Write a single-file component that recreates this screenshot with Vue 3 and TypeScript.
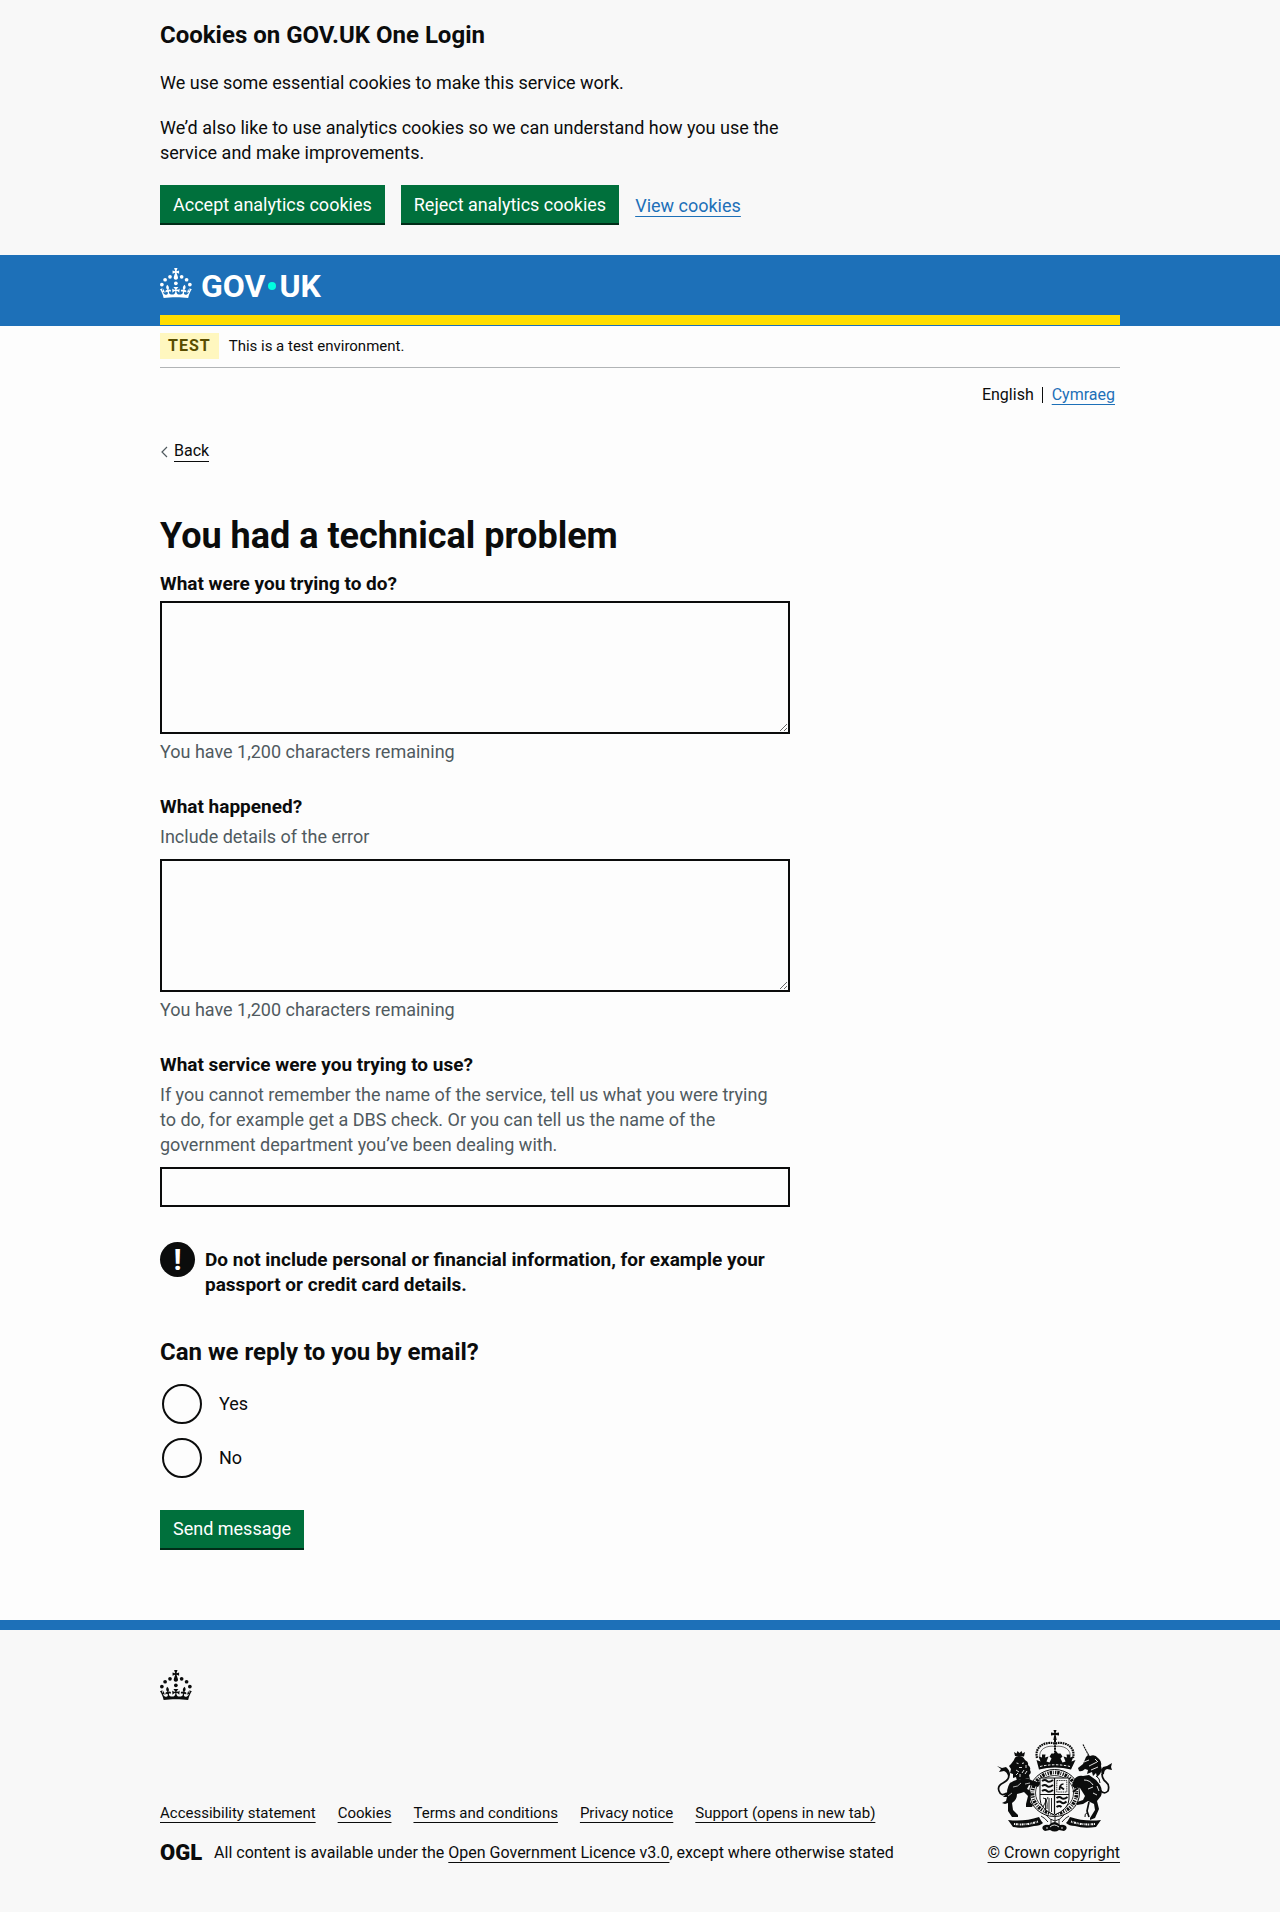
<script setup lang="ts">
import { ref } from 'vue'

const limit = 1200
const doing = ref('')
const happened = ref('')
const service = ref('')
const reply = ref('')

const remaining = (text: string) =>
  `You have ${(limit - text.length).toLocaleString('en-GB')} characters remaining`

const footerLinks = [
  'Accessibility statement',
  'Cookies',
  'Terms and conditions',
  'Privacy notice',
  'Support (opens in new tab)',
]

const crown =
  'M33.1,9.8c.2-.1.3-.3.5-.5l4.6,2.4v-6.8l-4.6,1.5c-.1-.2-.3-.3-.5-.5l1.9-5.9h-6.7l1.9,5.9c-.2.1-.3.3-.5.5l-4.6-1.5v6.8l4.6-2.4c.1.2.3.3.5.5l-2.6,8c-.9,2.8,1.2,5.7,4.1,5.7h0c3,0,5.1-2.9,4.1-5.7l-2.6-8ZM37,37.9s-3.4,3.8-4.1,6.1c2.2,0,4.2-.5,6.4-2.8l-.7,8.5c-2-2.8-4.4-4.1-5.7-3.8.1,3.1.5,6.7,5.8,7.2,3.7.3,6.7-1.5,7-3.8.4-2.6-2-4.3-3.7-1.6-1.4-4.5,2.4-6.1,4.9-3.2-1.9-4.5-1.8-7.7,2.4-10.9,3,4,2.6,7.3-1.2,11.1,2.4-1.3,6.2,0,4,4.6-1.2-2.8-3.7-2.2-4.2.2-.3,1.7.7,3.7,3,4.2,1.9.3,4.7-.9,7-5.9-1.3,0-2.4.7-3.9,1.7l2.4-8c.6,2.3,1.4,3.7,2.2,4.5.6-1.6.5-2.8,0-5.3l5,1.8c-2.6,3.6-5.2,8.7-7.3,17.5-7.4-1.1-15.7-1.7-24.5-1.7h0c-8.8,0-17.1.6-24.5,1.7-2.1-8.9-4.7-13.9-7.3-17.5l5-1.8c-.5,2.5-.6,3.7,0,5.3.8-.8,1.6-2.3,2.2-4.5l2.4,8c-1.5-1-2.6-1.7-3.9-1.7,2.3,5,5.2,6.2,7,5.9,2.3-.4,3.3-2.4,3-4.2-.5-2.4-3-3.1-4.2-.2-2.2-4.6,1.6-6,4-4.6-3.7-3.7-4.2-7.1-1.2-11.1,4.2,3.2,4.3,6.4,2.4,10.9,2.5-2.8,6.3-1.3,4.9,3.2-1.8-2.7-4.1-1-3.7,1.6.3,2.3,3.3,4.1,7,3.8,5.4-.5,5.7-4.2,5.8-7.2-1.3-.2-3.7,1-5.7,3.8l-.7-8.5c2.2,2.3,4.2,2.7,6.4,2.8-.7-2.3-4.1-6.1-4.1-6.1h10.6,0Z'
const crownDots = [
  [20, 17.6], [10.2, 23.5], [3.7, 33.2], [31.7, 30.6], [43.3, 17.6], [53.2, 23.5], [59.7, 33.2],
]
</script>

<template>
  <div class="page">
    <section class="cookies" aria-label="Cookies on GOV.UK One Login">
      <div class="container">
        <div class="column">
          <h2>Cookies on GOV.UK One Login</h2>
          <p>We use some essential cookies to make this service work.</p>
          <p>We’d also like to use analytics cookies so we can understand how you use the service and make improvements.</p>
        </div>
        <div class="button-group">
          <button type="button" class="button">Accept analytics cookies</button>
          <button type="button" class="button">Reject analytics cookies</button>
          <a href="#" class="link">View cookies</a>
        </div>
      </div>
    </section>

    <header class="header">
      <div class="container header-bar">
        <a href="#" class="logo" aria-label="GOV.UK">
          <svg class="crown" viewBox="0 0 64 60" fill="currentColor" aria-hidden="true">
            <circle v-for="([x, y], i) in crownDots" :key="i" :cx="x" :cy="y" r="3.7" />
            <path :d="crown" />
          </svg>
          <span class="wordmark"><span>GOV</span><i class="dot"></i><span>UK</span></span>
        </a>
      </div>
    </header>

    <div class="container">
      <div class="phase">
        <strong class="tag">TEST</strong>
        <span>This is a test environment.</span>
      </div>
      <nav class="languages" aria-label="Choose a language">
        <span>English</span>
        <a href="#" class="link">Cymraeg</a>
      </nav>
      <a href="#" class="back">
        <svg viewBox="0 0 8 12" aria-hidden="true"><path d="M7 1 2 6l5 5" fill="none" stroke="#505a5f" stroke-width="1.2" /></svg>
        <span>Back</span>
      </a>

      <main class="column">
        <h1>You had a technical problem</h1>
        <form @submit.prevent>
          <div class="field">
            <label for="doing">What were you trying to do?</label>
            <textarea id="doing" v-model="doing" aria-describedby="doing-count"></textarea>
            <p id="doing-count" class="hint">{{ remaining(doing) }}</p>
          </div>
          <div class="field">
            <label for="happened">What happened?</label>
            <p id="happened-hint" class="hint above">Include details of the error</p>
            <textarea id="happened" v-model="happened" aria-describedby="happened-hint happened-count"></textarea>
            <p id="happened-count" class="hint">{{ remaining(happened) }}</p>
          </div>
          <div class="field">
            <label for="service">What service were you trying to use?</label>
            <p id="service-hint" class="hint above">If you cannot remember the name of the service, tell us what you were trying to do, for example get a DBS check. Or you can tell us the name of the government department you’ve been dealing with.</p>
            <input id="service" v-model="service" type="text" aria-describedby="service-hint" />
          </div>

          <div class="warning">
            <span class="warning-icon" aria-hidden="true">!</span>
            <strong>Do not include personal or financial information, for example your passport or credit card details.</strong>
          </div>

          <fieldset>
            <legend>Can we reply to you by email?</legend>
            <div class="radio">
              <input id="reply-yes" v-model="reply" type="radio" name="reply" value="yes" />
              <label for="reply-yes">Yes</label>
            </div>
            <div class="radio">
              <input id="reply-no" v-model="reply" type="radio" name="reply" value="no" />
              <label for="reply-no">No</label>
            </div>
          </fieldset>

          <button type="submit" class="button">Send message</button>
        </form>
      </main>
    </div>

    <footer class="footer">
      <div class="container">
        <svg class="crown" viewBox="0 0 64 60" fill="currentColor" aria-hidden="true">
          <circle v-for="([x, y], i) in crownDots" :key="i" :cx="x" :cy="y" r="3.7" />
          <path :d="crown" />
        </svg>
        <div class="footer-meta">
          <div class="footer-main">
            <ul>
              <li v-for="label in footerLinks" :key="label"><a href="#">{{ label }}</a></li>
            </ul>
            <p class="licence">
              <span class="ogl" aria-hidden="true">OGL</span>
              <span>All content is available under the <a href="#">Open Government Licence v3.0</a>, except where otherwise stated</span>
            </p>
          </div>
          <a href="#" class="copyright">
            <svg class="arms" viewBox="0 0 120 104" fill="none" stroke="currentColor" aria-hidden="true">
              <!-- crown -->
              <g fill="currentColor" stroke="none">
                <path d="M59.500 1h3l-.8 3 3.300-.6v3.200l-3.300-.6 1 5h-3.400l1-5-3.300.6V3.400l3.300.6z" />
                <path d="M45 40.500 42.500 31l4 1.500-2-5 3.500 1 0-3 3.500 0-.5 3 3.500-1-2 5 3 1 2-4-2-2 2-3 2.500 0 2-2.500 2 2.500 2.500 0 2 3-2 2 2 4 3-1-2-5 3.500 1-.5-3 3.500 0 0 3 3.500-1-2 5 4-1.500L77 40.500q-16-4-32 0z" />
              </g>
              <path d="M46 37.500q15-3.500 30 0" stroke="#f8f8f8" stroke-width="1" stroke-dasharray="2.500 1.500" />
              <path d="M43 29C40 17 52 12 61 14.500C70 12 82 17 79 29" stroke-width="2.200" stroke-dasharray="1.700 .7" />
              <path d="M46 29C44 20 53 16 61 17.500C69 16 78 20 76 29" stroke-width=".6" />
              <path d="M61 11v15" stroke-width="2" stroke-dasharray="2 .6" />
              <!-- garter and quartered shield -->
              <ellipse cx="60.500" cy="64" rx="25" ry="23.500" stroke-width="1" />
              <ellipse cx="60.500" cy="64" rx="22" ry="20.500" stroke-width="3.600" stroke-dasharray="1.300 .9 2.400 .9 .8 1.400" />
              <ellipse cx="60.500" cy="64" rx="19" ry="17.500" stroke-width=".8" />
              <path d="M46 49h29v21q0 10-14.500 16Q46 80 46 70z" fill="#f8f8f8" stroke-width="1" />
              <path d="M60.500 49v36M46 65.500h29" stroke-width="1.200" />
              <path d="M48 52q3-2 5 0t6-1M48 57q3-2 5 0t6-1M48 62q3-2 5 0t6-1M62.500 69q3-2 5 0t6-1M62.500 73.500q3-2 5 0t5-1M62.500 78q3-2 5 0" stroke-width="2" />
              <path d="M62.800 51.500h10v11.500h-10z" stroke-width=".8" stroke-dasharray="1.500 .7" />
              <path d="M65.500 61q0-6 4-6M66 57.500l4 3" stroke-width="1.700" />
              <path d="M49 69q5 0 4 11M49 78l5-10M51.500 69v12M55 69v14M57.500 69v14" stroke-width=".9" />
              <!-- lion -->
              <g fill="currentColor" stroke="none">
                <path d="M21 27l-1-4 2.500 1.500 1-2.500 2 2 2-2 1 2.500L31 23l-1 4.500z" />
                <path d="M20 31q1-4 5-4t6 4q4 2 3 5 3 2 2 5 2 3-1 5l1 4-4-1-2 4-4-3-3 2-1-4-3 1 0-4-3-1 1-4-2-3 2-2z" />
                <path d="M16 54q6-4 12-4 6-2 9 1l5 2q4-1 4 2l-2 3-4-1-5-1-2 4q4 1 4 5l-1 8 3 3-1 2-6 0 0-3 2-8-4-4-3 1-4 1q0 6-5 9l1 7 5 5 0 2-6 0-4-6 0-8-3 1-3-1 4-2 1-4-4 0 4-4q0-7 5-13z" />
                <path d="M3 37l5 2 4-1q4 3 4 8l-2 1q-1-4-4-5l-5 1 2-3z" />
              </g>
              <path d="M15 46q0 5-6 8T5 62q2 6 8 2" stroke-width="1.700" />
              <path d="M22.500 34l2 .6M28 34.500l2-.6M25 38.500h3M22 41l3 2M30 41l-2 3M22 46l2-2M31 45l2-3M26 45v3M32 36v3" stroke="#f8f8f8" stroke-width=".9" />
              <path d="M19 58q5 0 8-4M31 55l5-1M14 67l4-3" stroke="#f8f8f8" stroke-width=".7" />
              <!-- unicorn -->
              <path d="M89 15.500 95 27" stroke-width="1.100" stroke-dasharray="2 .5" />
              <g fill="currentColor" stroke="none">
                <path d="M92 28l2-2 2 1q5-2 8 2 4 3 3 8l1 4-2 4-3 3-1-4-3 3-1-4-5 2 1-4-3-1q-3 3-6 2l-1-3 5-4z" />
                <path d="M80 51q3-5 9-4l6-1 7 5 4 5q3 5 1 11l-4 5 2 8-4 9-5 2 0-2 5-8-1-6-6-3-5 3-6 1 0-3 6-2 2-4-5-8-4-1q-4 1-4-2z" />
                <path d="M109 38l4-1 5-3-1 4 1 3-5-1q-3 1-3 5l-2 1q-2-5 1-8z" />
              </g>
              <path d="M95 73l-2 9 2 6M84 59l-5 4M108 45q0 5 4 8t2 9q-4 4-8-1" stroke-width="1.700" />
              <path d="M90 33l5-2M95 37l8-4M97 41l7-3M101 30l3 3M90 51q6 0 9 5M94 60l5-2M99 64l4 2M103 57l2 5" stroke="#f8f8f8" stroke-width=".9" />
              <path d="M102 47q4 2 4 7M94 83q-4 2-3 5" stroke-width="1" />
              <!-- compartment and motto ribbon -->
              <path d="M47 87q4 2 7 6M75 87q-4 2-7 6M52 86q4 5 9 6 5-1 9-6M57 90v6M65 90v6M61 86v9" stroke-width=".9" />
              <g fill="currentColor" stroke="none">
                <path d="M14 91q16 2 31-3 2 4 4 6-3 3-9 3-9 3-21 1z" />
                <path d="M107 91q-16 2-31-3-2 4-4 6 3 3 9 3 9 3 21 1z" />
                <path d="M49 97q3-2 6-1 3-3 5.500-3t5.500 3q3-1 6 1 2 3-2 5l-5-1q-4 3-9 0l-5 1q-4-2-2-5z" />
              </g>
              <path d="M20 95q13 1.500 24-2.500M101 95q-13 1.500-24-2.500" stroke="#f8f8f8" stroke-width="2" stroke-dasharray="1 .7 2 .8 .6 .7" />
              <path d="M56 98q4-4 9 0M52 99h2M67 99h2" stroke="#f8f8f8" stroke-width=".9" />
            </svg>
            <span>© Crown copyright</span>
          </a>
        </div>
      </div>
    </footer>
  </div>
</template>

<style>
body {
  background: #fdfdfd;
}
</style>

<style scoped>
.page {
  color: #0b0c0c;
  font-family: Roboto, "Liberation Sans", Arial, sans-serif;
  font-size: 18px;
  line-height: 25px;
}
.page *,
.page *::before {
  box-sizing: border-box;
}
.container {
  max-width: 960px;
  margin: 0 auto;
}
@media (max-width: 1020px) {
  .container {
    margin: 0 30px;
  }
}
.column {
  max-width: 630px;
}
h1,
h2,
p,
ul,
fieldset {
  margin: 0;
  padding: 0;
}
h2,
legend {
  font-size: 24px;
  font-weight: 700;
  line-height: 30px;
}
a {
  color: inherit;
  text-decoration-thickness: 1px;
  text-underline-offset: 4px;
}
a.link {
  color: #1d70b8;
}
.button {
  height: 40px;
  padding: 0 13px 2px;
  border: 0;
  background: #00703c;
  box-shadow: inset 0 -2px 0 #002d18;
  color: #fff;
  font: inherit;
  cursor: pointer;
}

/* Cookie banner */
.cookies {
  padding: 20px 0 30px;
  background: #f8f8f8;
}
.cookies h2,
.cookies p {
  margin-bottom: 20px;
}
.button-group {
  display: flex;
  flex-wrap: wrap;
  align-items: center;
  gap: 16px;
}

/* Header */
.header {
  background: #1d70b8;
}
.header-bar {
  display: flex;
  padding-top: 13px;
  height: 70px;
  border-bottom: 10px solid #ffdd00;
}
.header {
  padding-bottom: 1px;
}
.logo {
  display: flex;
  gap: 9px;
  height: 30px;
  color: #fff;
  text-decoration: none;
}
.crown {
  display: block;
  width: 32px;
  height: 30px;
}
.wordmark {
  display: flex;
  align-items: center;
  gap: 3px;
  padding-top: 6px;
  font-size: 32px;
  font-weight: 700;
  line-height: 30px;
}
.dot {
  width: 8px;
  height: 8px;
  border-radius: 50%;
  background: #00ffe0;
}

/* Page top */
.phase {
  display: flex;
  align-items: center;
  gap: 10px;
  padding: 7px 0 8px;
  border-bottom: 1px solid #b1b4b6;
  font-size: 15px;
}
.tag {
  padding: 0 8px;
  background: #fff7bf;
  color: #594d00;
  font-size: 16px;
  line-height: 26px;
  letter-spacing: 1px;
}
.languages {
  display: flex;
  justify-content: flex-end;
  padding: 17px 5px 0 0;
  font-size: 16px;
  line-height: 20px;
}
.languages span {
  padding-right: 8px;
}
.languages a {
  position: relative;
  padding-left: 10px;
}
.languages a::before {
  content: "";
  position: absolute;
  left: 0;
  top: 2px;
  height: 16px;
  border-left: 1px solid #0b0c0c;
}
.back {
  display: inline-flex;
  align-items: center;
  gap: 6px;
  margin-top: 36px;
  font-size: 16px;
  line-height: 20px;
  text-decoration: none;
}
.back svg {
  width: 8px;
  height: 12px;
}
.back span {
  border-bottom: 1px solid;
}

/* Form */
main {
  padding: 52px 0 70px;
}
h1 {
  margin-bottom: 15px;
  font-size: 36px;
  font-weight: 700;
  line-height: 40px;
}
.field {
  margin-bottom: 30px;
}
.field label {
  display: block;
  margin-bottom: 5px;
  font-size: 19px;
  font-weight: 700;
}
.hint {
  max-width: 620px;
  color: #505a5f;
}
.hint.above {
  margin-bottom: 10px;
}
textarea,
input[type="text"] {
  display: block;
  width: 100%;
  padding: 5px;
  border: 2px solid #0b0c0c;
  border-radius: 0;
  background: transparent;
  color: inherit;
  font: inherit;
}
textarea {
  height: 133px;
  margin-bottom: 5px;
  resize: vertical;
}
input[type="text"] {
  height: 40px;
}
.warning {
  display: flex;
  gap: 10px;
  margin: 35px 0 40px;
  font-size: 19px;
}
.warning strong {
  padding-top: 5px;
}
.warning-icon {
  flex: none;
  width: 35px;
  height: 35px;
  border-radius: 50%;
  background: #0b0c0c;
  color: #fff;
  font-size: 30px;
  font-weight: 700;
  line-height: 35px;
  text-align: center;
}
fieldset {
  margin-bottom: 32px;
  border: 0;
}
legend {
  margin-bottom: 17px;
  padding: 0;
}
.radio {
  display: flex;
  align-items: center;
  gap: 17px;
  padding-left: 2px;
}
.radio + .radio {
  margin-top: 14px;
}
.radio input {
  appearance: none;
  width: 40px;
  height: 40px;
  margin: 0;
  border: 2px solid #0b0c0c;
  border-radius: 50%;
  background: transparent;
}
.radio input:checked {
  background: radial-gradient(#0b0c0c 10px, transparent 11px);
}

/* Footer */
.footer {
  padding: 40px 0 50px;
  border-top: 10px solid #1d70b8;
  background: #f8f8f8;
  font-size: 16px;
  line-height: 20px;
}
.footer-meta {
  display: flex;
  align-items: flex-end;
  justify-content: space-between;
  gap: 20px;
  margin-top: 29px;
}
ul {
  display: flex;
  flex-wrap: wrap;
  gap: 8px 22px;
  margin-bottom: 20px;
  font-size: 15px;
  list-style: none;
}
.licence {
  display: flex;
  align-items: center;
  gap: 12px;
}
.ogl {
  font-size: 22px;
  font-weight: 900;
}
.copyright {
  display: flex;
  flex-direction: column;
  align-items: center;
  gap: 10px;
}
.arms {
  display: block;
  width: 120px;
  height: 104px;
}
</style>
